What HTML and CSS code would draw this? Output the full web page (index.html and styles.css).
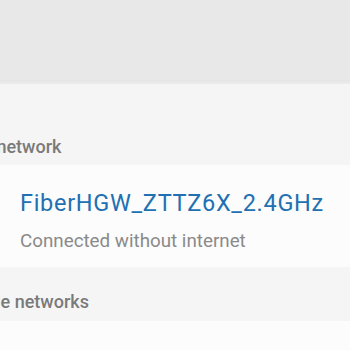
FILE: index.html
```html
<!DOCTYPE html>
<html>
<head>
<meta charset="utf-8">
<link rel="stylesheet" href="styles.css">
</head>
<body>
<div class="appbar"></div>
<div class="header header-current"><span class="header-text">Current network</span></div>
<div class="item">
  <div class="ssid">FiberHGW_ZTTZ6X_2.4GHz</div>
  <div class="status">Connected without internet</div>
</div>
<div class="header header-available"><span class="header-text">Available networks</span></div>
<div class="rest"></div>
</body>
</html>
```

FILE: styles.css
```css
html, body {
  margin: 0;
  padding: 0;
  background: #fcfcfc;
  font-family: Roboto, "Noto Sans", sans-serif;
  width: 350px;
  height: 350px;
  overflow: hidden;
}
.appbar {
  height: 84px;
  box-sizing: border-box;
  background: linear-gradient(to bottom, #e8e8e8 0, #e8e8e8 80px, #e5e5e5 80px, #ececec 84px);
}
.header {
  background: #f5f5f5;
  display: flex;
  flex-direction: column;
  justify-content: flex-end;
  box-sizing: border-box;
}
.header-current {
  height: 81px;
  padding-bottom: 6px;
}
.header-available {
  height: 54px;
  padding-bottom: 7px;
}
.header-text {
  font-size: 18px;
  line-height: 24px;
  font-weight: 500;
  color: #7a7a7a;
  white-space: nowrap;
}
.header-current .header-text {
  margin-left: -68px;
}
.header-available .header-text {
  margin-left: -63px;
}
.item {
  height: 102px;
  box-sizing: border-box;
  padding: 23px 0 0 20px;
  background: #fcfcfc;
}
.ssid {
  font-size: 23.5px;
  line-height: 30px;
  letter-spacing: 0.7px;
  color: #2170b1;
  white-space: nowrap;
}
.status {
  margin-top: 10px;
  font-size: 18.8px;
  line-height: 26px;
  color: #8a8a8a;
  white-space: nowrap;
}
.rest {
  height: 40px;
}
```
